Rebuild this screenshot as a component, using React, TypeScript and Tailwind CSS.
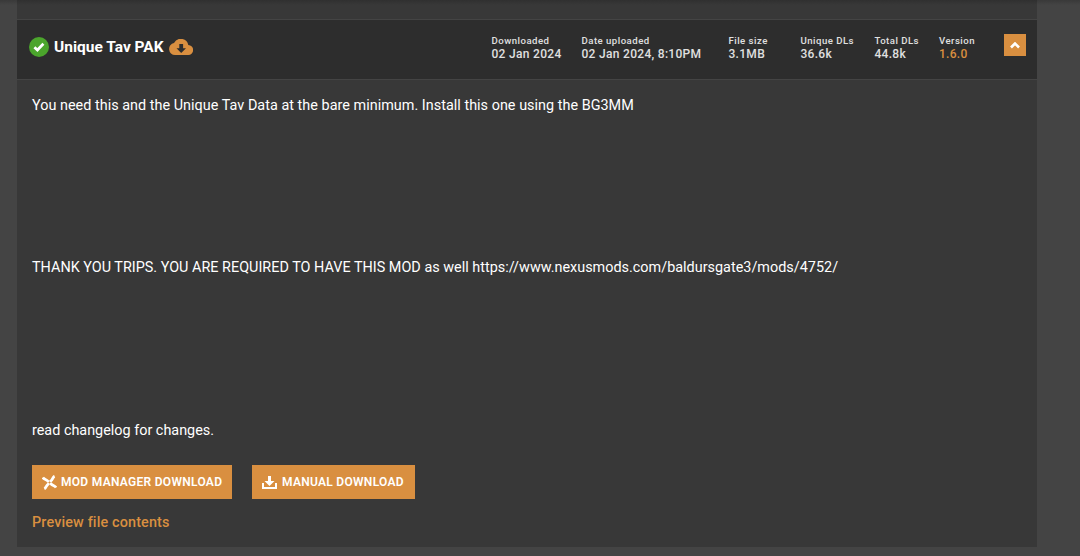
import React from "react";

type Stat = { label: string; value: string; width: string; accent?: boolean };

const stats: Stat[] = [
  { label: "Downloaded", value: "02 Jan 2024", width: "w-[90px]" },
  { label: "Date uploaded", value: "02 Jan 2024, 8:10PM", width: "w-[147px]" },
  { label: "File size", value: "3.1MB", width: "w-[72px]" },
  { label: "Unique DLs", value: "36.6k", width: "w-[74px]" },
  { label: "Total DLs", value: "44.8k", width: "w-[64.5px]" },
  { label: "Version", value: "1.6.0", width: "w-[65px]", accent: true },
];

function CheckIcon() {
  return (
    <svg className="h-5 w-5 shrink-0" viewBox="0 0 20 20">
      <circle cx="10" cy="10" r="10" fill="#4ba52c" />
      <path d="M5.400 10.200l3 2.800 6-6.300" fill="none" stroke="#fff" strokeWidth="2.700" />
    </svg>
  );
}

function CloudIcon() {
  return (
    <svg className="h-4 w-6 shrink-0" viewBox="0 0 24 16">
      <path d="M19.3 6A7.6 7.6 0 0 0 5 4.1 6 6 0 0 0 6 16h13a5 5 0 0 0 .3-10z" fill="#d98f40" />
      <path d="M10.3 5h3.8v4.300H17L12.200 14 7.500 9.300h2.800z" fill="#2d2d2d" />
    </svg>
  );
}

function ManagerIcon() {
  return (
    <svg className="h-[15px] w-[15px] shrink-0" viewBox="0 0 15 15" fill="none" stroke="#fff" strokeWidth="2.800">
      <path d="M.8 2.500C2 4.600 4.400 3.700 6.700 7" />
      <path d="M12.600 1.200C10.400 2.200 11.200 4.400 8 6.700" />
      <path d="M14 12.500C12.800 10.400 10.500 11.300 8.300 8" />
      <path d="M2.300 13.800C4.500 12.800 3.700 10.600 7 8.300" />
    </svg>
  );
}

function DownloadIcon() {
  return (
    <svg className="h-[13px] w-[15px] shrink-0" viewBox="0 0 15 13" fill="#fff">
      <path d="M6 0h3v5h3.500l-5 5-5-5H6z" />
      <path d="M0 7h2v4h11V7h2v6H0z" />
    </svg>
  );
}

export default function App() {
  return (
    <div className="flex h-[556px] w-[1080px] flex-col overflow-hidden bg-[#444] bg-linear-to-b from-[#393939] to-[#444] to-[5px] pl-[17px] font-['Roboto',sans-serif] text-white">
      <main className="flex h-[547px] w-[1020px] flex-col bg-[#383838]">
        <div className="h-[19px] shrink-0 bg-linear-to-b from-[#303030] to-[#383838] to-[5px]" />
        <header className="flex h-[61px] shrink-0 border-y border-[#444] bg-[#2d2d2d] pl-3">
          <div className="flex h-[54px] w-[462.5px] items-center">
            <CheckIcon />
            <h1 className="ml-[5px] text-[15.5px] leading-5 font-bold">Unique Tav PAK</h1>
            <span className="ml-[5px]"><CloudIcon /></span>
          </div>
          <dl className="flex pt-[15px]">
            {stats.map((s) => (
              <div key={s.label} className={`${s.width} shrink-0 whitespace-nowrap`}>
                <dt className="text-[9.6px] leading-3 font-medium tracking-[0.48px] text-[#e0e0e0]">{s.label}</dt>
                <dd className={`text-[12px] leading-[14px] font-medium tracking-[0.3px] ${s.accent ? "text-[#d98f40]" : "text-[#e0e0e0]"}`}>{s.value}</dd>
              </div>
            ))}
          </dl>
          <button aria-label="Collapse" className="mt-[14px] flex h-[22px] w-[22px] shrink-0 items-center justify-center bg-[#d98f40]">
            <svg className="h-[7px] w-[10px]" viewBox="0 0 10 7">
              <path d="M1 5.500l4-4 4 4" fill="none" stroke="#fff" strokeWidth="2.600" />
            </svg>
          </button>
        </header>
        <section className="flex flex-col items-start pl-[15px]">
          <p className="mt-4 text-[14.4px] leading-5 tracking-[0.025px]">You need this and the Unique Tav Data at the bare minimum. Install this one using the BG3MM</p>
          <p className="mt-[142px] text-[14.4px] leading-5 tracking-[0.012px]">THANK YOU TRIPS. YOU ARE REQUIRED TO HAVE THIS MOD as well https://www.nexusmods.com/baldursgate3/mods/4752/</p>
          <p className="mt-[143px] text-[14.4px] leading-5">read changelog for changes.</p>
          <div className="mt-6 flex gap-5 text-[12px] font-semibold tracking-[0.29px]">
            <button className="flex h-[34px] w-[200px] items-center gap-1 bg-[#d98f40] pl-[10px] whitespace-nowrap">
              <ManagerIcon />
              <span>MOD MANAGER DOWNLOAD</span>
            </button>
            <button className="flex h-[34px] w-[163px] items-center gap-[5px] bg-[#d98f40] pl-[10px] whitespace-nowrap">
              <DownloadIcon />
              <span>MANUAL DOWNLOAD</span>
            </button>
          </div>
          <a className="mt-[14px] text-[14.4px] leading-5 font-medium tracking-[0.14px] text-[#d98f40]">Preview file contents</a>
        </section>
      </main>
    </div>
  );
}
